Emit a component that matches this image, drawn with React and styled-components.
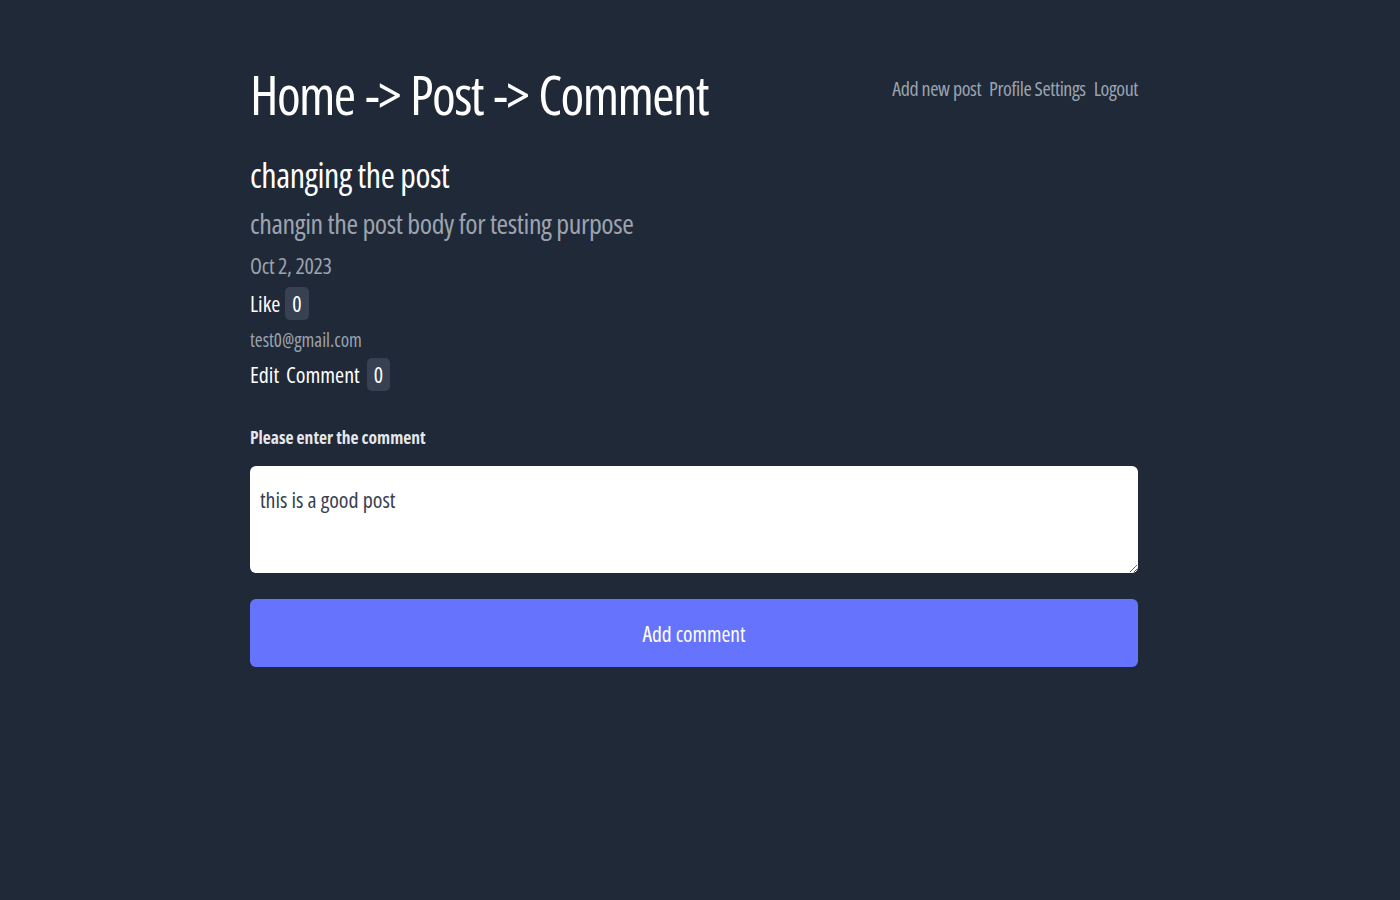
import React from "react"
import styled, { createGlobalStyle } from "styled-components"

const GlobalStyle = createGlobalStyle`
  html, body {
    margin: 0;
    padding: 0;
    background: #1f2937;
    min-height: 100%;
  }
  body {
    font-family: "Open Sans", "Noto Sans", sans-serif;
    font-stretch: 75%;
    color: #f3f4f6;
  }
`

//Styles
const Page = styled.div`
  min-height: 900px;
  background: #1f2937;
  display: flex;
  justify-content: center;
  padding-right: 12px;
`
const Container = styled.main`
  width: 888px;
  padding-top: 58px;
`
const Header = styled.header`
  display: flex;
  justify-content: space-between;
  align-items: flex-start;
`
const Title = styled.h1`
  margin: 0;
  font-size: 54px;
  font-weight: 400;
  line-height: 72px;
  color: #ffffff;
  letter-spacing: -1.6px;
  word-spacing: 2px;
`
const Nav = styled.nav`
  display: flex;
  gap: 8px;
  padding-top: 17px;
`
const NavLink = styled.a`
  color: #9ca3af;
  font-size: 20px;
  letter-spacing: -0.4px;
  text-decoration: none;
  cursor: pointer;
`
const PostTitle = styled.h2`
  margin: 22px 0 0;
  font-size: 34px;
  font-weight: 400;
  line-height: 46px;
  color: #ffffff;
  letter-spacing: -0.4px;
`
const Body = styled.p`
  margin: 2px 0 0;
  font-size: 28px;
  line-height: 46px;
  color: #9ca3af;
  letter-spacing: -0.4px;
`
const DateLine = styled.p`
  margin: 0;
  font-size: 22px;
  line-height: 38px;
  color: #9ca3af;
  letter-spacing: -0.3px;
`
const Row = styled.div`
  display: flex;
  align-items: center;
  gap: ${props => props.gap || "5px"};
  font-size: 22px;
  line-height: 34px;
  color: #ffffff;
  margin: ${props => props.top || 0} 0 0;
`
const Badge = styled.span`
  background: #374151;
  border-radius: 5px;
  padding: 0 7px;
  line-height: 33px;
`
const Email = styled.p`
  margin: 3px 0 0;
  font-size: 19px;
  line-height: 34px;
  color: #9ca3af;
`
const Form = styled.form`
  margin-top: 33px;
  display: flex;
  flex-direction: column;
`
const Label = styled.label`
  font-size: 17.5px;
  font-weight: 700;
  color: #e5e7eb;
  line-height: 26px;
`
const TextArea = styled.textarea`
  margin-top: 16px;
  height: 107px;
  box-sizing: border-box;
  border: none;
  border-radius: 6px;
  background: #ffffff;
  padding: 18px 10px;
  font-family: inherit;
  font-stretch: 75%;
  font-size: 22px;
  color: #374151;
  resize: vertical;
  outline: none;
`
const Button = styled.button`
  margin-top: 26px;
  height: 68px;
  border: none;
  border-radius: 6px;
  background: #6673fd;
  color: #ffffff;
  font-family: inherit;
  font-stretch: 75%;
  font-size: 21.5px;
  cursor: pointer;
`

const App = () => {
  return (
    <Page>
      <GlobalStyle />
      <Container>
        <Header>
          <Title>Home -&gt; Post -&gt; Comment</Title>
          <Nav>
            <NavLink>Add new post</NavLink>
            <NavLink>Profile Settings</NavLink>
            <NavLink>Logout</NavLink>
          </Nav>
        </Header>
        <PostTitle>changing the post</PostTitle>
        <Body>changin the post body for testing purpose</Body>
        <DateLine>Oct 2, 2023</DateLine>
        <Row top="2px">
          <span>Like</span>
          <Badge>0</Badge>
        </Row>
        <Email>test0@gmail.com</Email>
        <Row gap="7px">
          <span>Edit</span>
          <span>Comment</span>
          <Badge>0</Badge>
        </Row>
        <Form onSubmit={e => e.preventDefault()}>
          <Label htmlFor="comment">Please enter the comment</Label>
          <TextArea id="comment" defaultValue="this is a good post" />
          <Button type="submit">Add comment</Button>
        </Form>
      </Container>
    </Page>
  )
}

export default App
